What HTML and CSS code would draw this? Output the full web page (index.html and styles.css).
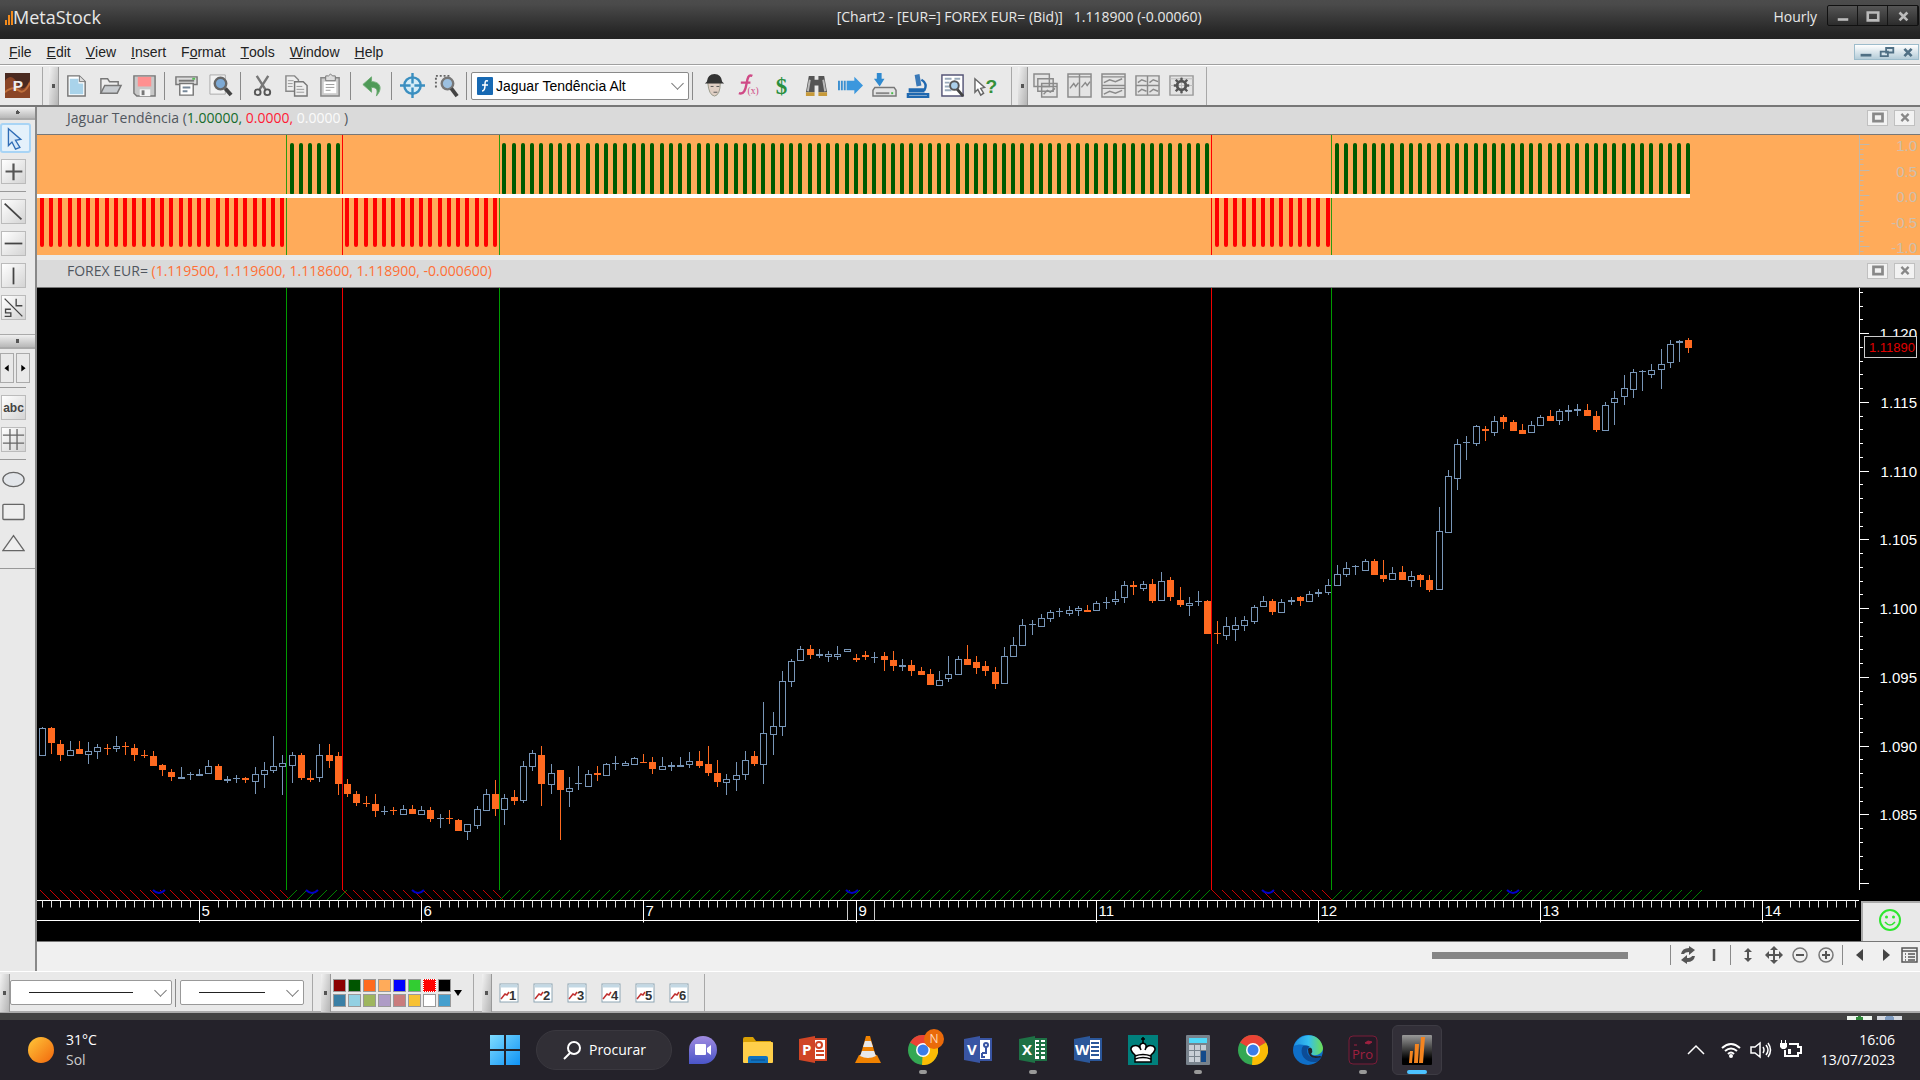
FILE: index.html
```html
<!DOCTYPE html>
<html lang="pt-br">
<head>
  <meta charset="UTF-8" />
  <title>MetaStock</title>
  <meta name="viewport" content="width=device-width, initial-scale=1" />
  <link rel="stylesheet" href="styles.css">
</head>
<body>
  <header class="titlebar">
    <div class="brand">
      <svg width="8" height="16" viewBox="0 0 8 16"><path d="M0 16V11h2v5zM3 16V6h2v10zM6 16V2h2v14z" fill="#f28a1c"/></svg>
      <span>MetaStock</span>
    </div>
    <h1 class="doc-title">[Chart2 - [EUR=] FOREX EUR= (Bid)] &nbsp; 1.118900 (-0.00060)</h1>
    <span class="period">Hourly</span>
    <div class="win-buttons">
      <button aria-label="Minimize"><svg viewBox="0 0 20 16"><path d="M4 12h12" stroke="#bbb" stroke-width="3"/></svg></button>
      <button aria-label="Maximize"><svg viewBox="0 0 20 16"><path d="M4 4h12v9H4z" fill="none" stroke="#bbb" stroke-width="3"/></svg></button>
      <button aria-label="Close"><svg viewBox="0 0 20 16"><path d="M6 4l9 9M15 4l-9 9" stroke="#bbb" stroke-width="3"/></svg></button>
    </div>
  </header>

  <nav class="menubar">
    <button><u>F</u>ile</button>
    <button><u>E</u>dit</button>
    <button><u>V</u>iew</button>
    <button><u>I</u>nsert</button>
    <button>F<u>o</u>rmat</button>
    <button><u>T</u>ools</button>
    <button><u>W</u>indow</button>
    <button><u>H</u>elp</button>
    <div class="mdi-buttons">
      <button aria-label="Minimize chart"><svg viewBox="0 0 20 14"><path d="M4 10h12" stroke="#4f6f84" stroke-width="3"/></svg></button>
      <button aria-label="Restore chart"><svg viewBox="0 0 20 14"><path d="M9 2h8v5H9zM3 6h8v5H3z" fill="#d5e4ec" stroke="#4f6f84" stroke-width="2"/></svg></button>
      <button aria-label="Close chart"><svg viewBox="0 0 20 14"><path d="M6 3l8 8M14 3l-8 8" stroke="#4f6f84" stroke-width="3"/></svg></button>
    </div>
  </nav>

  <div class="toolbar">
    <button class="tool power" aria-label="Power Console">
      <svg viewBox="0 0 26 26"><rect width="26" height="26" fill="#4a2a20"/><path d="M0 8q7-9 13 3t13-4v19H0z" fill="#8a4526"/><path d="M0 20q8-7 14-2t12-8" fill="none" stroke="#c0703c" stroke-width="2"/><text x="8" y="19" class="ico-p">P</text></svg>
    </button>
    <span class="sep tall"></span>
    <span class="grip"></span>
    <button class="tool" aria-label="New">
      <svg viewBox="0 0 26 26"><path d="M4 3h12l6 6v15H4z" fill="#fff" stroke="#777" stroke-width="1.5"/><path d="M6 6h9v5h5v11H6z" fill="#a9d3ea"/><path d="M16 3v6h6" fill="#ddd" stroke="#777"/></svg>
    </button>
    <button class="tool" aria-label="Open">
      <svg viewBox="0 0 26 26"><path d="M3 21V6h7l2 3h9v4" fill="#eee" stroke="#777" stroke-width="1.5"/><path d="M3 21l4-8h17l-4 8z" fill="#c8ccd0" stroke="#777" stroke-width="1.5"/></svg>
    </button>
    <button class="tool" aria-label="Save">
      <svg viewBox="0 0 26 26"><path d="M2 3h22v21H5l-3-3z" fill="#c8c8c8" stroke="#777" stroke-width="1.5"/><path d="M6 4h14v10H6z" fill="#ff9090"/><path d="M8 17h11v7H8z" fill="#f4f4f4"/><path d="M10 18h3v5h-3z" fill="#777"/></svg>
    </button>
    <span class="sep"></span>
    <button class="tool" aria-label="Print">
      <svg viewBox="0 0 26 26"><path d="M2 4h22v8H2z" fill="#ddd" stroke="#777" stroke-width="1.5"/><path d="M5 8h16" stroke="#777" stroke-width="2"/><path d="M6 11h14v12H6z" fill="#fff" stroke="#777" stroke-width="1.5"/><path d="M9 15h8M9 19h5" stroke="#789" stroke-width="2"/><path d="M19 6h3" stroke="#5b5" stroke-width="2"/></svg>
    </button>
    <button class="tool" aria-label="Print preview">
      <svg viewBox="0 0 26 26"><path d="M2 2h16v20H2z" fill="#f2f2f2" stroke="#aaa"/><circle cx="13" cy="11" r="6" fill="#7da9d4" stroke="#666" stroke-width="2.500"/><path d="M18 16l6 7" stroke="#444" stroke-width="4"/></svg>
    </button>
    <span class="sep"></span>
    <button class="tool" aria-label="Cut">
      <svg viewBox="0 0 26 26"><path d="M7 3l9 14M19 3l-9 14" stroke="#777" stroke-width="2.500"/><circle cx="8" cy="20" r="3" fill="none" stroke="#555" stroke-width="2"/><circle cx="18" cy="20" r="3" fill="none" stroke="#555" stroke-width="2"/></svg>
    </button>
    <button class="tool" aria-label="Copy">
      <svg viewBox="0 0 26 26"><path d="M2 3h9l4 4v12H2z" fill="#eee" stroke="#888" stroke-width="1.500"/><path d="M11 9h9l4 4v11H11z" fill="#eee" stroke="#777" stroke-width="1.500"/><path d="M4 8h6M4 11h5M4 14h5M13 14h6M13 17h8M13 20h8" stroke="#999"/></svg>
    </button>
    <button class="tool" aria-label="Paste">
      <svg viewBox="0 0 26 26"><path d="M3 5h19v19H3z" fill="#ccc" stroke="#888" stroke-width="1.500"/><path d="M6 9h13v12H6z" fill="#fff"/><path d="M8 3h3l2-2 2 2h3v5H8z" fill="#ddd" stroke="#777"/><path d="M8 12h9M8 15h9M8 18h5" stroke="#999"/></svg>
    </button>
    <span class="sep"></span>
    <button class="tool" aria-label="Undo">
      <svg viewBox="0 0 26 26"><path d="M3 12l9-8v5c9 0 12 7 5 15 2-7 0-9-5-9v5z" fill="#4f9a58" stroke="#6fae76"/></svg>
    </button>
    <span class="sep slim"></span>
    <button class="tool" aria-label="Data target">
      <svg viewBox="0 0 26 26"><circle cx="13" cy="13" r="8.500" fill="#d6edf7" stroke="#3b8fc0" stroke-width="2.500"/><path d="M13 0v11M13 15v11M0 13h11M15 13h11" stroke="#3b8fc0" stroke-width="2.500"/></svg>
    </button>
    <button class="tool" aria-label="Zoom box">
      <svg viewBox="0 0 26 26"><path d="M2 15V3h14" fill="none" stroke="#666" stroke-width="2" stroke-dasharray="2 2"/><circle cx="14" cy="11" r="6" fill="#9cc0e0" stroke="#777" stroke-width="2.500"/><path d="M18 16l6 8" stroke="#444" stroke-width="4"/></svg>
    </button>
    <span class="sep"></span>
    <label class="indicator">
      <svg width="16" height="18" viewBox="0 0 16 18"><rect width="16" height="18" rx="1" fill="#1769b3"/><path d="M11 4c-3-1-3 1-3 4s0 6-3 6M5 8h6" fill="none" stroke="#fff" stroke-width="1.500"/></svg>
      <select aria-label="Indicator"><option>Jaguar Tendência Alt</option></select>
    </label>
    <span class="sep"></span>
    <button class="tool" aria-label="Expert advisor">
      <svg viewBox="0 0 26 26"><path d="M6 10h13q0 13-6 14-6-1-7-14z" fill="#e0cfc4" stroke="#998"/><path d="M5 9q1-8 8-8t8 8l2 2H3z" fill="#333"/><path d="M9 14h3M15 14h3M12 20h4" stroke="#555"/></svg>
    </button>
    <button class="tool" aria-label="Indicator builder">
      <svg viewBox="0 0 26 26"><path d="M17 3c-4-2-5 2-6 8s-3 12-8 10M5 10h10" fill="none" stroke="#cf4a86" stroke-width="2.500"/><text x="12" y="22" class="ico-fx">(x)</text></svg>
    </button>
    <button class="tool" aria-label="System tester">
      <svg viewBox="0 0 26 26"><text x="6" y="22" class="ico-dollar">$</text></svg>
    </button>
    <button class="tool" aria-label="Explorer">
      <svg viewBox="0 0 26 26"><path d="M5 3h6v4h4V3h6l3 17h-9v-7h-4v7H2z" fill="#555"/><path d="M2 20h9v4H2zM15 20h9v4h-9z" fill="#c79a3a"/><path d="M6 7l-2 12M20 7l2 12" stroke="#bbb" stroke-width="2"/></svg>
    </button>
    <button class="tool" aria-label="Forecaster">
      <svg viewBox="0 0 26 26"><path d="M1 8v10M4 8v10M7 8v10" stroke="#3b8fd0" stroke-width="2"/><path d="M9 8h8V4l9 9-9 9v-4H9z" fill="#3b97dd"/></svg>
    </button>
    <button class="tool" aria-label="Download">
      <svg viewBox="0 0 26 26"><path d="M3 15h20l2 3v6H1v-6z" fill="#e4e4e4" stroke="#777" stroke-width="1.500"/><path d="M4 21h14" stroke="#888" stroke-width="2"/><path d="M20 21h2" stroke="#4b4" stroke-width="2"/><path d="M5 0h5v6h3l-5 8-6-8h3z" fill="#2f8ad0"/></svg>
    </button>
    <button class="tool" aria-label="Optimize">
      <svg viewBox="0 0 26 26"><path d="M9 2l5-1 2 12-5 1z" fill="#3a79b8"/><path d="M16 7q7 4 3 11M4 17h14v2H4zM2 22h21v3H2z" fill="none" stroke="#1f68b0" stroke-width="2.500"/></svg>
    </button>
    <button class="tool" aria-label="Report">
      <svg viewBox="0 0 26 26"><path d="M2 2h22v22H2z" fill="#fff" stroke="#557" stroke-width="1.500"/><path d="M5 6h7M5 10h5M5 14h5M5 18h7M15 6h6" stroke="#9ab" stroke-width="2"/><circle cx="15" cy="13" r="4.500" fill="#acd0ea" stroke="#555" stroke-width="2"/><path d="M18 17l6 7" stroke="#444" stroke-width="3"/></svg>
    </button>
    <button class="tool" aria-label="Context help">
      <svg viewBox="0 0 26 26"><path d="M1 6v14l3-3 3 6 3-2-3-5 4-1z" fill="#fff" stroke="#666" stroke-width="1.500"/><text x="12" y="21" class="ico-help">?</text></svg>
    </button>
    <span class="sep tall"></span>
    <span class="grip"></span>
    <button class="tool" aria-label="Cascade">
      <svg viewBox="0 0 26 26" fill="#e4e4e4" stroke="#8a8a8a" stroke-width="1.500"><path d="M1 1h16v13H1zM5 6h16v13H5zM9 11h16v14H9z"/><path d="M9 14h16M11 22l4-4 3 2 5-4" fill="none"/></svg>
    </button>
    <button class="tool" aria-label="Tile columns">
      <svg viewBox="0 0 26 26" fill="#e4e4e4" stroke="#8a8a8a" stroke-width="1.500"><path d="M1 1h12v24H1zM13 1h12v24H13z"/><path d="M1 4h24M3 16l4-5 2 3 3-4M15 15l4-5 2 3 3-4" fill="none"/></svg>
    </button>
    <button class="tool" aria-label="Tile rows">
      <svg viewBox="0 0 26 26" fill="#e4e4e4" stroke="#8a8a8a" stroke-width="1.500"><path d="M1 1h24v12H1zM1 13h24v12H1z"/><path d="M1 4h24M1 16h24M3 10l6-3 6 2 7-3M3 22l6-3 6 2 7-3" fill="none"/></svg>
    </button>
    <button class="tool" aria-label="Tile all">
      <svg viewBox="0 0 26 26" fill="#e4e4e4" stroke="#8a8a8a" stroke-width="1.500"><path d="M1 3h12v10H1zM13 3h12v10H13zM1 13h12v10H1zM13 13h12v10H13z"/><path d="M3 10l4-3 5 2M15 10l4-3 5 2M3 20l4-3 5 2M15 20l4-3 5 2" fill="none"/></svg>
    </button>
    <button class="tool" aria-label="Layout options">
      <svg viewBox="0 0 26 26"><path d="M1 3h24v20H1z" fill="#e4e4e4" stroke="#999" stroke-width="1.500"/><path d="M1 6h24M13 3v20M1 13h24" stroke="#bbb"/><circle cx="13" cy="13" r="4.500" fill="none" stroke="#555" stroke-width="3"/><path d="M13 5v4M13 17v4M5 13h4M17 13h4M7 7l3 3M16 16l3 3M19 7l-3 3M10 16l-3 3" stroke="#555" stroke-width="2.500"/></svg>
    </button>
    <span class="sep tall end"></span>
  </div>

  <main class="workspace">
    <aside class="toolbox">
      <span class="grip-h"></span>
      <button class="draw active" aria-label="Select"><svg viewBox="0 0 26 26"><path d="M5 2l14 12-6 1 5 8-5 2-4-8-4 4z" fill="#d5e8fa" stroke="#2f6cb5" stroke-width="1.500"/></svg></button>
      <button class="draw" aria-label="Crosshair"><svg viewBox="0 0 26 26"><path d="M13 4v19M4 13h19" stroke="#555" stroke-width="2.500"/></svg></button>
      <hr>
      <button class="draw" aria-label="Trendline"><svg viewBox="0 0 26 26"><path d="M3 4l19 18" stroke="#444" stroke-width="2"/></svg></button>
      <button class="draw" aria-label="Horizontal line"><svg viewBox="0 0 26 26"><path d="M3 13h20" stroke="#444" stroke-width="2"/></svg></button>
      <button class="draw" aria-label="Vertical line"><svg viewBox="0 0 26 26"><path d="M13 4v19" stroke="#444" stroke-width="2"/></svg></button>
      <button class="draw" aria-label="Semi-log trendline"><svg viewBox="0 0 26 26"><path d="M3 3l20 20M16 3v8h7M10 15H4v4h6v4H3" fill="none" stroke="#444" stroke-width="1.500"/></svg></button>
      <span class="grip-h second"></span>
      <div class="nudge">
        <button aria-label="Previous tools"><svg viewBox="0 0 14 26"><path d="M9 9v8l-5-4z"/></svg></button>
        <button aria-label="Next tools"><svg viewBox="0 0 14 26"><path d="M5 9v8l5-4z"/></svg></button>
      </div>
      <hr class="tight">
      <button class="draw" aria-label="Text"><span class="abc">abc</span></button>
      <button class="draw" aria-label="Grid"><svg viewBox="0 0 26 26"><path d="M9 1v24M17 1v24M1 8h24M1 17h24" stroke="#666" stroke-width="1.500"/></svg></button>
      <hr class="tight">
      <button class="draw flat" aria-label="Ellipse"><svg viewBox="0 0 26 26"><ellipse cx="13" cy="13" rx="12" ry="8" fill="#e3e6ea" stroke="#666" stroke-width="1.500"/></svg></button>
      <button class="draw flat" aria-label="Rectangle"><svg viewBox="0 0 26 26"><rect x="1" y="5" width="24" height="17" rx="1" fill="#eee" stroke="#666" stroke-width="1.500"/></svg></button>
      <button class="draw flat" aria-label="Triangle"><svg viewBox="0 0 26 26"><path d="M13 4l12 17H1z" fill="#eee" stroke="#666" stroke-width="1.500"/></svg></button>
      <hr class="last">
    </aside>

    <div class="charts">
      <section class="pane">
        <header class="pane-head">
          <h2>Jaguar Tendência (<span class="c-green">1.00000, </span><span class="c-red">0.0000, </span><span class="c-white">0.0000 </span>)</h2>
          <button aria-label="Maximize indicator"><svg viewBox="0 0 20 14"><path d="M5 3h10v8H5z" fill="none" stroke="#888" stroke-width="3"/></svg></button>
          <button aria-label="Close indicator"><svg viewBox="0 0 20 14"><path d="M6 3l8 8M14 3l-8 8" stroke="#888" stroke-width="2.500"/></svg></button>
        </header>
        <svg id="trend" class="trend"></svg>
      </section>

      <section class="pane price-pane">
        <header class="pane-head">
          <h2>FOREX EUR= <span class="c-orange">(1.119500, 1.119600, 1.118600, 1.118900, -0.000600)</span></h2>
          <button aria-label="Maximize price"><svg viewBox="0 0 20 14"><path d="M5 3h10v8H5z" fill="none" stroke="#888" stroke-width="3"/></svg></button>
          <button aria-label="Close price"><svg viewBox="0 0 20 14"><path d="M6 3l8 8M14 3l-8 8" stroke="#888" stroke-width="2.500"/></svg></button>
        </header>
        <div class="price-wrap">
          <svg id="price" class="price"></svg>
          <button class="smiley" aria-label="Expert">
            <svg width="24" height="24" viewBox="0 0 24 24"><circle cx="12" cy="12" r="10" fill="none" stroke="#2fe62f" stroke-width="2"/><circle cx="8.500" cy="9" r="1.500" fill="#2fe62f"/><circle cx="15.500" cy="9" r="1.500" fill="#2fe62f"/><path d="M7 14q5 6 10 0" fill="none" stroke="#2fe62f" stroke-width="1.500"/></svg>
          </button>
        </div>
      </section>

      <div class="scroll-row">
        <div class="track"><div class="thumb"></div></div>
        <span class="sep"></span>
        <button aria-label="Refresh"><svg viewBox="0 0 18 18"><path d="M2 8q1-6 8-6V0l6 4-6 5V6q-4 0-5 2zM16 10q-1 6-8 6v2l-6-4 6-5v3q4 0 5-2z" fill="#555"/></svg></button>
        <button aria-label="Bar"><svg viewBox="0 0 18 18"><path d="M9 3v12" stroke="#555" stroke-width="2.500"/></svg></button>
        <span class="sep"></span>
        <button aria-label="Vertical scale"><svg viewBox="0 0 18 18"><path d="M9 2l4 4h-3v6h3l-4 4-4-4h3V6H5z" fill="#555"/></svg></button>
        <button aria-label="Move"><svg viewBox="0 0 18 18"><path d="M9 0l4 4h-3v4h4V5l4 4-4 4v-3h-4v4h3l-4 4-4-4h3v-4H4v3L0 9l4-4v3h4V4H5z" fill="#555"/></svg></button>
        <button aria-label="Zoom out"><svg viewBox="0 0 18 18"><circle cx="9" cy="9" r="7" fill="none" stroke="#777" stroke-width="1.500"/><path d="M5 9h8" stroke="#555" stroke-width="2"/></svg></button>
        <button aria-label="Zoom in"><svg viewBox="0 0 18 18"><circle cx="9" cy="9" r="7" fill="none" stroke="#777" stroke-width="1.500"/><path d="M5 9h8M9 5v8" stroke="#555" stroke-width="2"/></svg></button>
        <span class="sep"></span>
        <button aria-label="Scroll left"><svg viewBox="0 0 18 18"><path d="M12 3v12L5 9z" fill="#444"/></svg></button>
        <button aria-label="Scroll right"><svg viewBox="0 0 18 18"><path d="M6 3v12l7-6z" fill="#444"/></svg></button>
        <button class="list" aria-label="Periods"><svg viewBox="0 0 18 18"><path d="M2 2h15v14H2zM2 5h15M5 8h1M5 11h1M5 14h1M8 8h7M8 11h7M8 14h7" fill="none" stroke="#555" stroke-width="1.500"/></svg></button>
      </div>
    </div>
  </main>

  <div class="toolbar bottom">
    <span class="grip"></span>
    <label class="line-pick style"><select aria-label="Line style"><option></option></select></label>
    <span class="sep"></span>
    <label class="line-pick weight"><select aria-label="Line weight"><option></option></select></label>
    <span class="sep tall wide"></span>
    <span class="grip"></span>
    <div class="palette">
      <button class="sw sw-maroon" aria-label="Maroon"></button>
      <button class="sw sw-green" aria-label="Dark green"></button>
      <button class="sw sw-orange" aria-label="Orange"></button>
      <button class="sw sw-peach" aria-label="Peach"></button>
      <button class="sw sw-blue" aria-label="Blue"></button>
      <button class="sw sw-lime" aria-label="Lime"></button>
      <button class="sw sw-red picked" aria-label="Red"></button>
      <button class="sw sw-black" aria-label="Black"></button>
      <button class="sw sw-teal" aria-label="Teal"></button>
      <button class="sw sw-sky" aria-label="Sky"></button>
      <button class="sw sw-olive" aria-label="Olive"></button>
      <button class="sw sw-mauve" aria-label="Mauve"></button>
      <button class="sw sw-rose" aria-label="Rose"></button>
      <button class="sw sw-gold" aria-label="Gold"></button>
      <button class="sw sw-white" aria-label="White"></button>
      <button class="sw sw-azure" aria-label="Azure"></button>
    </div>
    <button class="more" aria-label="More colors"><svg width="8" height="6" viewBox="0 0 8 6"><path d="M0 0h8L4 6z"/></svg></button>
    <span class="sep tall wide"></span>
    <span class="grip"></span>
    <div class="layouts" id="layouts"></div>
    <span class="sep tall end"></span>
  </div>

  <div class="statusbar">
    <span class="tag"></span><span class="tag grey"></span>
  </div>

  <footer class="taskbar">
    <button class="weather">
      <svg width="26" height="26" viewBox="0 0 26 26"><defs><linearGradient id="sun" x1="0" y1="0" x2="1" y2="1"><stop offset="0" stop-color="#ffc83a"/><stop offset="1" stop-color="#f2660c"/></linearGradient></defs><circle cx="13" cy="13" r="13" fill="url(#sun)"/></svg>
      <span>31°C<br><em>Sol</em></span>
    </button>
    <div class="apps">
      <button class="app" aria-label="Start"><svg viewBox="0 0 30 30"><defs><linearGradient id="win" x1="0" y1="0" x2="1" y2="1"><stop offset="0" stop-color="#7fdcff"/><stop offset="1" stop-color="#0f93f5"/></linearGradient></defs><path d="M0 0h14v14H0zM16 0h14v14H16zM0 16h14v14H0zM16 16h14v14H16z" fill="url(#win)"/></svg></button>
      <button class="search"><svg width="20" height="20" viewBox="0 0 20 20"><circle cx="12" cy="8" r="6" fill="none" stroke="#fff" stroke-width="2"/><path d="M8 13l-6 6" stroke="#fff" stroke-width="2"/></svg>Procurar</button>
      <button class="app" aria-label="Chat"><svg viewBox="0 0 30 30"><defs><linearGradient id="chat" x1="0" y1="0" x2="0" y2="1"><stop offset="0" stop-color="#a08be0"/><stop offset="1" stop-color="#4a55c8"/></linearGradient></defs><path d="M1 29V15A14 14 0 1 1 15 29z" fill="url(#chat)"/><rect x="7" y="9" width="11" height="11" rx="1" fill="#fff"/><path d="M19 13l4-3v10l-4-3z" fill="#fff"/></svg></button>
      <button class="app" aria-label="Explorador"><svg viewBox="0 0 30 30"><path d="M0 4q0-2 2-2h8l3 4h15v5H0z" fill="#d9a004"/><rect y="7" width="30" height="21" rx="1" fill="#ffcf4a"/><path d="M5 28v-5q0-2 2-2h16q2 0 2 2v5z" fill="#0f72c0"/><path d="M8 25h14" stroke="#0a4a86"/></svg></button>
      <button class="app" aria-label="PowerPoint"><svg viewBox="0 0 30 30"><path d="M13 4h15v21H13z" fill="#fff" stroke="#d04525" stroke-width="2"/><path d="M18 16h8M18 20h8" stroke="#d04525" stroke-width="2"/><circle cx="21" cy="10" r="3" fill="none" stroke="#d04525" stroke-width="2"/><path d="M1 4l16-3v27L1 25z" fill="#d04525"/><text x="4" y="20" class="ico-office">P</text></svg></button>
      <button class="app" aria-label="VLC"><svg viewBox="0 0 30 30"><path d="M6 20h18l4 8H2z" fill="#f08200"/><path d="M13 1h4l6 21q-8 4-16 0z" fill="#f08200"/><path d="M12 6h6l2 6h-10zM9 16h12l2 5q-8 4-16 0z" fill="#e8e8e8"/></svg></button>
      <button class="app running" aria-label="Chrome N"><svg viewBox="0 0 30 30"><circle cx="15" cy="15" r="15" fill="#34a853"/><path d="M15 15L2 7.500A15 15 0 0 1 28 7.500z" fill="#ea4335"/><path d="M15 15L28 7.500A15 15 0 0 1 14 30z" fill="#fbbc05"/><circle cx="15" cy="15" r="7" fill="#fff"/><circle cx="15" cy="15" r="5.500" fill="#3b7de9"/></svg><span class="badge">N</span></button>
      <button class="app" aria-label="Visio"><svg viewBox="0 0 30 30"><path d="M13 4h15v21H13z" fill="#fff" stroke="#3955a3" stroke-width="2"/><path d="M19 18h4v-7M19 18v4h3" fill="none" stroke="#3955a3" stroke-width="2"/><circle cx="23" cy="10" r="2" fill="#fff" stroke="#3955a3" stroke-width="2"/><path d="M1 4l16-3v27L1 25z" fill="#3955a3"/><text x="4" y="20" class="ico-office">V</text></svg></button>
      <button class="app running" aria-label="Excel"><svg viewBox="0 0 30 30"><path d="M13 4h15v21H13z" fill="#fff" stroke="#1e7145" stroke-width="2"/><path d="M18 8h9M18 12h9M18 16h9M18 20h9M22 5v19" stroke="#1e7145" stroke-width="2"/><path d="M1 4l16-3v27L1 25z" fill="#1e7145"/><text x="4" y="20" class="ico-office">X</text></svg></button>
      <button class="app" aria-label="Word"><svg viewBox="0 0 30 30"><path d="M13 4h15v21H13z" fill="#fff" stroke="#2b579a" stroke-width="2"/><path d="M18 8h8M18 12h8M18 16h8M18 20h8" stroke="#2b579a" stroke-width="2"/><path d="M1 4l16-3v27L1 25z" fill="#2b579a"/><text x="2" y="20" class="ico-office">W</text></svg></button>
      <button class="app" aria-label="Chess"><svg viewBox="0 0 30 30"><rect width="30" height="30" fill="#00807c"/><path d="M15 2v7M13 4h4" stroke="#000" stroke-width="1.500"/><path d="M7 27v-7Q0 14 5 11q6-2 8 4-3-6 2-7 5 1 2 7 2-6 8-4 5 3-2 9v7z" fill="#fff" stroke="#000" stroke-width="1.500"/><path d="M7 21q8-3 16 0M7 24q8-3 16 0" fill="none" stroke="#000" stroke-width="1.500"/></svg></button>
      <button class="app running" aria-label="Calculadora"><svg viewBox="0 0 30 30"><rect x="3" width="24" height="30" rx="1" fill="#78828c"/><path d="M6 3h18v5H6z" fill="#50d8f8"/><path d="M6 10h5v5H6zM12 10h5v5h-5zM18 10h5v5h-5zM6 16h5v5H6zM12 16h5v5h-5zM6 22h5v5H6zM12 22h5v5h-5z" fill="#c8ced6"/><path d="M18 16h5v11h-5z" fill="#134a8a"/></svg></button>
      <button class="app" aria-label="Chrome"><svg viewBox="0 0 30 30"><circle cx="15" cy="15" r="15" fill="#34a853"/><path d="M15 15L2 7.500A15 15 0 0 1 28 7.500z" fill="#ea4335"/><path d="M15 15L28 7.500A15 15 0 0 1 14 30z" fill="#fbbc05"/><circle cx="15" cy="15" r="7" fill="#fff"/><circle cx="15" cy="15" r="5.500" fill="#3b7de9"/></svg></button>
      <button class="app" aria-label="Edge"><svg viewBox="0 0 30 30"><defs><linearGradient id="edge" x1="0" y1="0" x2="1" y2="0"><stop offset="0" stop-color="#1f8fe0"/><stop offset=".5" stop-color="#35bff0"/><stop offset="1" stop-color="#6fe04f"/></linearGradient></defs><circle cx="15" cy="15" r="15" fill="#0f6fc8"/><path d="M1 11C6-4 28-3 30 13c0 6-8 9-12 6 2-8-10-12-17-8z" fill="url(#edge)"/><path d="M9 13c-2 7 3 15 14 14q4-1 6-6c-5 4-15 2-15-5 0-3 2-4 3-4-3-2-7-2-8 1z" fill="#0c4c96"/><path d="M15 14q2-3 4 0 1 3-1 5 2 3 9 2l2 1q-14 4-14-8z" fill="#24222a"/></svg></button>
      <button class="app running" aria-label="MetaStock Pro"><svg viewBox="0 0 30 30"><rect x="1" y="1" width="28" height="28" rx="4" fill="#241a26" stroke="#7a1c38"/><text x="4" y="24" class="ico-pro">Pro</text><path d="M17 8l3-2 4 1-3 2zM6 10h3" fill="#a02040" stroke="#a02040"/></svg></button>
      <button class="app current" aria-label="MetaStock"><svg viewBox="0 0 30 30"><defs><linearGradient id="ms" x1="0" y1="0" x2="0" y2="1"><stop offset="0" stop-color="#999"/><stop offset=".8" stop-color="#000"/></linearGradient></defs><rect width="30" height="30" rx="1" fill="url(#ms)"/><path d="M7 28l1-12h3l-1 12zM12 28l1-19h4l-1 19zM17 28l2-26h4l-2 26z" fill="#f5841f"/></svg></button>
    </div>
    <div class="tray">
      <button aria-label="Hidden icons"><svg viewBox="0 0 22 22"><path d="M3 15l8-8 8 8" fill="none" stroke="#fff" stroke-width="1.500"/></svg></button>
      <button aria-label="Wi-Fi"><svg viewBox="0 0 22 22" fill="none" stroke="#fff" stroke-width="2"><path d="M2 9q9-8 18 0M5 12q6-5 12 0M8 15q3-3 6 0"/><circle cx="11" cy="17" r="1" fill="#fff"/></svg></button>
      <button aria-label="Volume"><svg viewBox="0 0 22 22" fill="none" stroke="#fff" stroke-width="1.500"><path d="M1 8h4l5-4v14l-5-4H1zM13 8q2 3 0 6M16 6q4 5 0 10M18 4q5 7 0 14"/></svg></button>
      <button aria-label="Battery"><svg viewBox="0 0 22 22"><path d="M9 5h9v3h3v6h-3v3H5v-6" fill="none" stroke="#fff" stroke-width="2"/><path d="M1 1v3H0v4l2 2h3l2-2V4H6V1H5v3H2V1z" fill="#fff"/><path d="M8 10h3v5H8z" fill="#fff"/></svg></button>
      <button class="clock">16:06<br>13/07/2023</button>
    </div>
  </footer>

  <script src="script.js"></script>
</body>
</html>
```
FILE: styles.css
```css
* {
  box-sizing: border-box;
}
html, body {
  margin: 0;
  height: 100%;
  overflow: hidden;
  background-color: #e9e9e9;
  font-family: 'Open Sans', 'Noto Sans', sans-serif;
}
body {
  display: flex;
  flex-direction: column;
}
button {
  margin: 0;
  padding: 0;
  border: none;
  background: none;
  font: inherit;
  color: inherit;
  display: flex;
  align-items: center;
  justify-content: center;
  flex-shrink: 0;
}
h1, h2 {
  margin: 0;
  font-weight: 400;
  white-space: nowrap;
}

/* title bar */
.titlebar {
  display: flex;
  height: 39px;
  flex-shrink: 0;
  padding: 0 1px 0 5px;
  background: linear-gradient(#4c4c4c, #4a4a4a 12%, #252525 85%, #222);
  color: #e8e8e8;
}
.brand {
  display: flex;
  align-items: center;
  font-size: 18px;
  height: 34px;
}
.doc-title {
  flex: 1;
  padding-left: 164px;
  text-align: center;
  font-size: 14px;
  line-height: 34px;
}
.period {
  font-size: 14px;
  line-height: 34px;
  margin-right: 10px;
}
.win-buttons {
  display: flex;
  height: 21px;
  margin-top: 5px;
  border: 1px solid #111;
  border-radius: 2px;
  background: linear-gradient(#555, #2c2c2c);
}
.win-buttons button {
  width: 30px;
  border-right: 1px solid #161616;
}
.win-buttons svg {
  width: 18px;
  height: 14px;
}

/* menu */
.menubar {
  display: flex;
  gap: 15px;
  height: 26px;
  flex-shrink: 0;
  padding: 0 1px 0 9px;
  border-bottom: 1px solid #a0a0a0;
  font-family: 'Liberation Sans', Arial, sans-serif;
  font-size: 14px;
  color: #222;
}
.mdi-buttons {
  display: flex;
  margin: 5px 0 4px auto;
  border: 1px solid #9dbccb;
  background: linear-gradient(#fff, #b4ccd8);
}
.mdi-buttons button {
  width: 21px;
}
.mdi-buttons svg {
  width: 18px;
  height: 13px;
}

/* toolbars */
.toolbar {
  display: flex;
  align-items: center;
  height: 42px;
  flex-shrink: 0;
  border-top: 1px solid #fff;
  border-bottom: 2px solid #777;
  background: #e9e9e9;
}
.tool {
  width: 34px;
  height: 34px;
}
.tool svg {
  width: 25px;
  height: 25px;
}
.sep {
  width: 1px;
  height: 28px;
  margin: 0 4px 0 3px;
  background: #8a8a8a;
  flex-shrink: 0;
}
.sep.tall {
  height: 38px;
  margin: 0 6px 0 8px;
  background: #a8a8a8;
}
.sep.slim {
  margin: 0 3px 0 2px;
}
.grip {
  width: 10px;
  height: 38px;
  flex-shrink: 0;
  background: radial-gradient(circle, #555 2px, transparent 2px), linear-gradient(100deg, #f2f2f2, #b4b4b4);
  border-right: 1px solid #999;
}
.ico-p {
  font: bold 16px 'Liberation Sans', sans-serif;
  fill: #eee;
}
.ico-fx {
  font: 10px 'Liberation Serif', serif;
  fill: #cf4a86;
}
.ico-dollar {
  font: bold 24px 'Liberation Serif', serif;
  fill: #2a8f3e;
}
.ico-help {
  font: bold 20px 'Liberation Sans', sans-serif;
  fill: #35903a;
}
.indicator {
  display: flex;
  align-items: center;
  width: 218px;
  height: 28px;
  padding-left: 5px;
  border: 1px solid #8a8a8a;
  border-radius: 2px;
  background: #fff;
}
select {
  flex: 1;
  min-width: 0;
  height: 24px;
  padding: 0 0 0 3px;
  border: none;
  appearance: none;
  font: 14px 'Liberation Sans', Arial, sans-serif;
  color: #000;
  background: transparent;
}
.indicator::after,
.line-pick::after {
  content: "";
  width: 8px;
  height: 8px;
  margin: 0 6px 5px 0;
  border: solid #777;
  border-width: 0 1px 1px 0;
  transform: rotate(45deg);
}

/* left toolbox */
.workspace {
  flex: 1;
  display: flex;
  min-height: 0;
}
.toolbox {
  width: 37px;
  flex-shrink: 0;
  border-right: 2px solid #888;
  background: #e9e9e9;
}
.grip-h {
  display: block;
  height: 13px;
  background: radial-gradient(circle, #555 2px, transparent 2px), linear-gradient(#f0f0f0, #b8b8b8);
  border-bottom: 2px solid #aaa;
}
.grip-h.second {
  height: 15px;
  margin-top: 14px;
  border-top: 1px solid #aaa;
}
.draw {
  width: 25px;
  height: 25px;
  margin: 0 0 7px 1px;
  border: 1px solid #bbb;
  background: linear-gradient(135deg, #fff, #d4d4d4);
}
.draw svg {
  width: 23px;
  height: 23px;
}
.draw.active {
  width: 31px;
  height: 30px;
  margin: 3px 0 6px 0;
  border: 2px solid #a8d4f5;
  border-radius: 3px;
  background: #e4f1fb;
}
.draw.flat {
  border-color: transparent;
  background: none;
}
.abc {
  font: bold 12px 'Liberation Sans', sans-serif;
  color: #444;
}
.toolbox hr {
  width: 26px;
  margin: 0 0 7px 0;
  border: none;
  border-top: 1px solid #999;
}
.toolbox hr.tight {
  margin-top: 4px;
}
.toolbox hr.last {
  width: 100%;
  margin-top: 12px;
}
.nudge {
  display: flex;
  gap: 2px;
  padding: 4px 0 0;
}
.nudge button {
  width: 14px;
  height: 30px;
  border: 1px solid #aaa;
}
.nudge svg {
  width: 12px;
}

/* chart panes */
.charts {
  flex: 1;
  min-width: 0;
  display: flex;
  flex-direction: column;
}
.pane {
  display: flex;
  flex-direction: column;
}
.price-pane {
  flex: 1;
  min-height: 0;
  border-top: 5px solid #e9e9e9;
}
.pane-head {
  display: flex;
  align-items: center;
  gap: 6px;
  height: 28px;
  flex-shrink: 0;
  padding: 0 5px 6px 30px;
  border-bottom: 1px solid #777;
  background: #dadada;
  color: #50565e;
}
.pane-head h2 {
  flex: 1;
  font-size: 14px;
  line-height: 20px;
}
.pane-head button {
  width: 21px;
  height: 16px;
  border: 1px solid #c0c0c0;
  background: #f2f2f2;
}
.pane-head button svg {
  width: 18px;
  height: 13px;
}
.c-green { color: #156b2c; }
.c-red { color: #ff1a35; }
.c-white { color: #fafafa; }
.c-orange { color: #ff6f35; }
.trend {
  display: block;
  width: 100%;
  height: 120px;
  background: #ffab5a;
}
.price-wrap {
  position: relative;
  flex: 1;
  min-height: 0;
}
.price {
  display: block;
  width: 100%;
  height: 100%;
  background: #000;
}
.axis-text {
  font: 15px 'Liberation Sans', Arial, sans-serif;
  fill: #fff;
}
.axis-text.dim {
  fill: #cdbfae;
}
.axis-text.last {
  font-size: 13px;
  fill: #e00000;
}
.smiley {
  position: absolute;
  right: 0;
  bottom: 0;
  width: 59px;
  height: 40px;
  padding: 0 4px 4px 0;
  border: 2px solid #aaa;
  border-width: 2px 0 0 2px;
  background: #e9e9e9;
}
.scroll-row {
  display: flex;
  align-items: center;
  height: 30px;
  flex-shrink: 0;
  padding: 0 1px 3px 0;
  border-top: 1px solid #777;
  background: #f0f0f0;
}
.scroll-row button {
  width: 26px;
  height: 22px;
}
.scroll-row button svg {
  width: 18px;
  height: 18px;
}
.scroll-row button.list {
  width: 20px;
}
.scroll-row .sep {
  height: 20px;
}
.track {
  flex: 1;
}
.thumb {
  width: 12%;
  height: 7px;
  margin-left: auto;
  margin-right: 39px;
  background: #858585;
}

/* bottom toolbar */
.bottom {
  padding-top: 2px;
  border-bottom: 2px solid #aaa;
}
.line-pick {
  position: relative;
  display: flex;
  align-items: center;
  height: 25px;
  border: 1px solid #999;
  border-radius: 2px;
  background: #fff;
}
.line-pick.style { width: 162px; }
.line-pick.weight { width: 124px; }
.line-pick::before {
  content: "";
  position: absolute;
  left: 18px;
  right: 38px;
  top: 11px;
  height: 1px;
  background: #222;
}
.sep.tall.wide {
  margin: 0 8px;
}
.palette {
  display: grid;
  grid-template-columns: repeat(8, 13px);
  gap: 2px;
  margin-left: 2px;
}
.sw {
  height: 13px;
  border: 1px solid #999;
}
.sw.picked { border: 1px dotted #fff; }
.sw-maroon { background: #8b0000; }
.sw-green { background: #005500; }
.sw-orange { background: #ff6a20; }
.sw-peach { background: #ffab5a; }
.sw-blue { background: #0000ff; }
.sw-lime { background: #32cd32; }
.sw-red { background: #ff0000; }
.sw-black { background: #000; }
.sw-teal { background: #3a7fa5; }
.sw-sky { background: #92d0e2; }
.sw-olive { background: #9eb65e; }
.sw-mauve { background: #ae9cc6; }
.sw-rose { background: #c97c7c; }
.sw-gold { background: #f7c133; }
.sw-white { background: #fff; }
.sw-azure { background: #449fce; }
.more {
  width: 14px;
  height: 25px;
}
.layouts {
  display: flex;
}
.layouts button {
  width: 34px;
  height: 34px;
}
.ico-num {
  font: bold 13px 'Liberation Sans', sans-serif;
  fill: #333;
}
.statusbar {
  display: flex;
  justify-content: flex-end;
  gap: 5px;
  height: 7px;
  flex-shrink: 0;
  padding: 3px 18px 0 0;
  background: #424242;
}
.tag {
  width: 25px;
  background: radial-gradient(circle at bottom, #2f8a3a 4px, #eef5ee 4px);
}
.tag.grey {
  background: radial-gradient(circle at bottom, #7f9cc0 5px, #d4d8de 5px);
}

/* taskbar */
.taskbar {
  display: grid;
  grid-template-columns: 1fr auto 1fr;
  align-items: center;
  height: 60px;
  flex-shrink: 0;
  background: #24222a;
  color: #fff;
  font-size: 14px;
  line-height: 20px;
}
.weather {
  justify-self: start;
  gap: 12px;
  padding-left: 28px;
  text-align: left;
}
.weather em {
  font-style: normal;
  color: #ccc;
}
.apps {
  display: flex;
  align-items: center;
  padding-left: 1px;
}
.app {
  position: relative;
  width: 55px;
  height: 50px;
}
.app svg {
  width: 30px;
  height: 30px;
}
.app.running::after,
.app.current::after {
  content: "";
  position: absolute;
  bottom: 1px;
  width: 8px;
  height: 4px;
  border-radius: 2px;
  background: #999;
}
.app.current {
  width: 50px;
  margin: 0 2px;
  border: 1px solid #3d3b43;
  border-radius: 6px;
  background: #322f38;
}
.app.current::after {
  width: 20px;
  bottom: 0;
  background: #4cc2ff;
}
.badge {
  position: absolute;
  top: 4px;
  right: 6px;
  width: 20px;
  height: 20px;
  border-radius: 50%;
  background: #ea6a0a;
  font-size: 12px;
  color: #ffd9b8;
}
.search {
  gap: 7px;
  width: 136px;
  height: 40px;
  margin: 0 3px 0 4px;
  border: 1px solid #3a383f;
  border-radius: 20px;
  background: #312f36;
}
.ico-office {
  font: bold 15px 'Open Sans', sans-serif;
  fill: #fff;
}
.ico-pro {
  font: 13px 'Open Sans', sans-serif;
  fill: #a02040;
}
.tray {
  display: flex;
  align-items: center;
  justify-self: end;
  padding-right: 25px;
}
.tray button {
  width: 30px;
  height: 30px;
}
.tray button:first-child {
  margin-right: 5px;
}
.tray svg {
  width: 22px;
  height: 22px;
}
.tray .clock {
  display: block;
  width: auto;
  height: 40px;
  margin-left: 15px;
  text-align: right;
}
```
FILE: script.js
```js
// one entry per hour: u/d = up/down, then high, body top, body bottom, low on a 602 high plot
const bars = `
u439,440,468,468 d439,440,455,465 d452,456,467,472 u453,462,468,468 d453,461,466,466 u454,463,467,475
u456,459,464,470 d456,460,461,466 u448,458,461,463 d454,458,459,466 d456,460,467,472 d462,467,468,469
d463,468,478,478 d476,477,482,487 d481,484,489,492 u479,489,491,491 u484,486,487,491 u481,486,488,488
u472,478,486,486 d476,478,492,492 u488,491,493,494 u487,490,491,494 d489,490,492,494 u479,486,494,505
u474,482,487,499 u448,478,483,484 u467,475,479,506 u464,467,478,494 d465,467,490,491 d482,490,492,493
u456,467,490,493 d456,467,473,479 d464,468,496,506 d491,496,506,508 d503,506,515,517 d508,515,516,518
d506,516,523,528 u518,523,524,526 d519,522,523,526 u517,521,527,527 d517,521,526,526 u518,522,527,527
d519,522,531,533 u526,530,531,539 d522,530,531,535 d531,532,543,543 u536,536,544,551 u518,521,538,540
u501,506,523,523 d492,506,521,527 u506,510,522,536 d502,509,513,516 u473,478,513,514 u462,465,479,482
d458,467,496,517 u476,485,497,505 d482,482,502,551 u489,500,504,518 u478,495,496,501 u482,486,499,499
d478,485,487,492 u475,476,488,488 u468,475,476,481 u473,475,478,478 u469,470,477,477 d466,474,475,475
d469,474,481,485 u469,478,482,482 u474,477,479,482 u469,477,479,479 u464,473,477,479 d463,473,478,479
d458,476,485,487 d472,485,494,498 u486,491,495,506 u474,487,492,502 u463,472,487,491 d463,468,476,477
u414,445,477,495 u424,438,447,466 u383,393,439,447 u371,373,394,398 u358,361,373,373 d357,361,367,370
u361,366,368,369 u363,366,369,373 u358,366,369,371 u361,361,364,364 d366,370,372,373 d363,367,369,371
u364,369,370,374 d364,368,372,382 d363,372,378,382 u371,377,379,382 d372,377,383,387 d379,383,387,387
d381,386,397,397 u383,392,398,398 u368,386,391,393 u368,371,387,387 d357,371,377,377 d368,374,380,385
d373,378,383,387 d379,384,396,400 u359,368,396,396 u349,357,369,369 u331,337,358,358 u332,336,337,346
u326,330,339,339 u322,324,331,333 u320,323,324,328 u318,322,326,327 u318,320,323,327 d317,322,324,324
u313,315,323,323 u309,314,315,320 u303,311,314,316 u293,297,310,314 d293,297,299,306 u293,296,301,302
d291,296,313,314 u284,293,313,313 d289,292,309,312 d299,312,317,318 u309,315,318,327 u303,313,314,317
d312,313,346,346 d333,345,346,355 u329,338,348,351 u329,337,342,352 u328,332,338,342 u317,319,334,335
u308,313,319,319 d311,313,324,326 u311,314,325,325 u309,312,314,316 d308,309,313,317 u303,306,314,314
u301,304,306,308 u291,297,305,306 u277,286,298,298 u274,280,287,288 u277,278,279,286 u271,273,283,283
d271,273,287,287 d272,287,291,293 u279,285,292,292 d278,284,292,292 u283,288,293,298 d286,287,292,298
d287,292,302,303 u219,243,302,302 u182,188,245,245 u151,156,191,201 u148,154,155,171 u137,138,156,157
d138,141,143,152 u128,133,145,147 d127,129,134,140 d132,134,143,143 d136,142,146,146 u133,137,145,145
u127,129,138,138 d122,128,133,133 u121,123,133,136 u117,122,124,132 u116,121,123,127 d116,122,128,128
d123,128,142,143 u114,117,143,143 u103,110,115,136 u87,100,109,116 u81,84,102,109 u82,83,84,102
u76,82,87,89 u61,76,82,100 u52,56,75,79 u52,53,55,73 d50,52,60,64`
  .trim().split(/\s+/).map(s => [s[0], ...s.slice(1).split(',').map(Number)]);

// trend switches: first bar of every run
const runs = [[0, -1], [27, 1], [33, -1], [50, 1], [127, -1], [140, 1]];
const days = [[17, '5'], [41, '6'], [65, '7'], [88, '9'], [114, '11'], [138, '12'], [162, '13'], [186, '14']];
const alerts = [12.7, 29.2, 40.7, 87.6, 132.6, 159];

const UP = '#7896b8', DOWN = '#ff6a20', GREEN = '#009a00', RED = '#f00000';
const AXIS = 61;

function rect(x, y, w, h, fill, extra = '') {
  return `<rect x="${x}" y="${y}" width="${w}" height="${h}" fill="${fill}" ${extra}/>`;
}
function line(x1, y1, x2, y2, stroke, extra = '') {
  return `<path d="M${x1} ${y1}L${x2} ${y2}" stroke="${stroke}" ${extra}/>`;
}
function text(x, y, str, cls = '', anchor = 'start') {
  return `<text x="${x}" y="${y}" class="axis-text ${cls}" text-anchor="${anchor}">${str}</text>`;
}
function xOf(i, w) {
  return Math.round(5 + i * (w - AXIS) / 197);
}

function drawTrend() {
  const svg = document.getElementById('trend');
  const w = svg.clientWidth, h = svg.clientHeight;
  let out = '';
  bars.forEach((b, i) => {
    const dir = runs.filter(r => r[0] <= i).pop()[1];
    const x = xOf(i, w) - 2;
    out += dir > 0 ? rect(x, 8, 4, 52, '#005a00', 'rx="2"') : rect(x, 61, 4, 51, '#f00', 'rx="2"');
  });
  runs.slice(1).forEach(([i, dir]) => {
    const x = xOf(i - 0.6, w) + 0.5;
    out += line(x, 0, x, h, dir > 0 ? '#2c9a12' : '#f00');
  });
  out += rect(0, 59, xOf(178, w) + 2, 4, '#fff');

  const ax = w - AXIS + 0.5;
  out += line(ax, 0, ax, h, '#c0b8ac');
  for (let t = -11; t <= 11; t++) {
    const y = Math.round(60 - t * 5.1) + 0.5;
    out += line(ax, y, ax + (t % 5 ? 4 : 10), y, '#c0b8ac');
    if (t % 5 === 0) out += text(w - 3, y + 6, (t / 10).toFixed(1), 'dim', 'end');
  }
  svg.innerHTML = out;
}

function drawPrice() {
  const svg = document.getElementById('price');
  const w = svg.clientWidth, h = svg.clientHeight;
  const base = h - 51, k = base / 602;
  const ax = w - AXIS;
  let out = '';

  bars.forEach(([dir, hi, top, bot, lo], i) => {
    const x = xOf(i, w) + 0.5;
    const [a, b, c, d] = [hi, top, bot, lo].map(v => Math.round(v * k));
    const col = dir === 'u' ? UP : DOWN;
    if (b > a) out += line(x, a, x, b, col);
    if (d > c) out += line(x, c, x, d + 1, col);
    if (dir === 'd') out += rect(x - 3.5, b, 7, Math.max(c - b, 1), col);
    else if (c - b < 2) out += rect(x - 3.5, b, 7, 1, col);
    else out += rect(x - 3, b + 0.5, 6, c - b - 1, '#000', `stroke="${col}"`);
  });

  runs.slice(1).forEach(([i, dir]) => {
    const x = xOf(i - 0.6, w) + 0.5;
    out += line(x, 0, x, base, dir > 0 ? GREEN : RED);
  });

  // ribbon of slanted strokes under the candles
  runs.forEach(([i, dir], n) => {
    const from = n ? xOf(i - 0.5, w) : 3;
    const to = n < runs.length - 1 ? xOf(runs[n + 1][0] - 0.5, w) : xOf(179, w);
    for (let x = from; x < to - 5; x += 10) {
      out += dir > 0
        ? line(x, base + 10, x + 10, base, '#008000')
        : line(x, base, x + 10, base + 10, '#c80000');
    }
  });
  alerts.forEach(i => {
    const x = xOf(i, w);
    out += `<path d="M${x - 6} ${base}q6 6 12 0" fill="none" stroke="#0000c8" stroke-width="2"/>`;
  });

  // price scale
  out += line(ax + 0.5, 0, ax + 0.5, base, '#fff');
  for (let t = -3; t <= 40; t++) {
    const y = Math.round((45 + t * 13.75) * k) + 0.5;
    const major = t % 5 === 0;
    out += line(ax, y, ax + (major ? 10 : 4), y, '#fff');
    if (major && t < 40) out += text(w - 3, y + 5, (1.12 - t / 1000).toFixed(3), '', 'end');
  }
  const py = Math.round(60 * k);
  out += rect(ax + 5.5, py - 11.5, 52, 21, '#000', 'stroke="#ccc"');
  out += text(w - 5, py + 4, '1.11890', 'last', 'end');

  // date scale
  const dy = base + 10.5;
  out += line(0, dy, ax, dy, '#fff') + line(0, dy + 20, ax, dy + 20, '#fff');
  for (let i = 0; i < 197; i++) {
    const x = xOf(i, w) + 0.5;
    const day = days.find(d => d[0] === i);
    if (day) {
      out += line(x, dy, x, dy + 22, '#fff') + text(x + 2, dy + 15, day[1]);
    } else if (i === 87 || i === 90) {
      out += line(x, dy, x, dy + 20, '#ccc');
    } else if (!days.some(d => i - d[0] === 1 || (d[1].length > 1 && i - d[0] === 2))) {
      out += line(x, dy, x, dy + 7, '#ddd');
    }
  }
  svg.innerHTML = out;
}

document.getElementById('layouts').innerHTML = [1, 2, 3, 4, 5, 6].map(n => `
  <button aria-label="Layout ${n}"><svg width="20" height="20" viewBox="0 0 20 20">
    <rect x="1" y="1" width="18" height="18" fill="#fff" stroke="#8ea6b4"/>
    <path d="M2 3h16" stroke="#c3d8e4" stroke-width="3"/>
    <path d="M2 16l4-5 2 1 2-3" fill="none" stroke="#c03030" stroke-width="1.500"/>
    <text x="10" y="17" class="ico-num">${n}</text></svg></button>`).join('');

function draw() {
  drawTrend();
  drawPrice();
}
draw();
window.addEventListener('resize', draw);
```
